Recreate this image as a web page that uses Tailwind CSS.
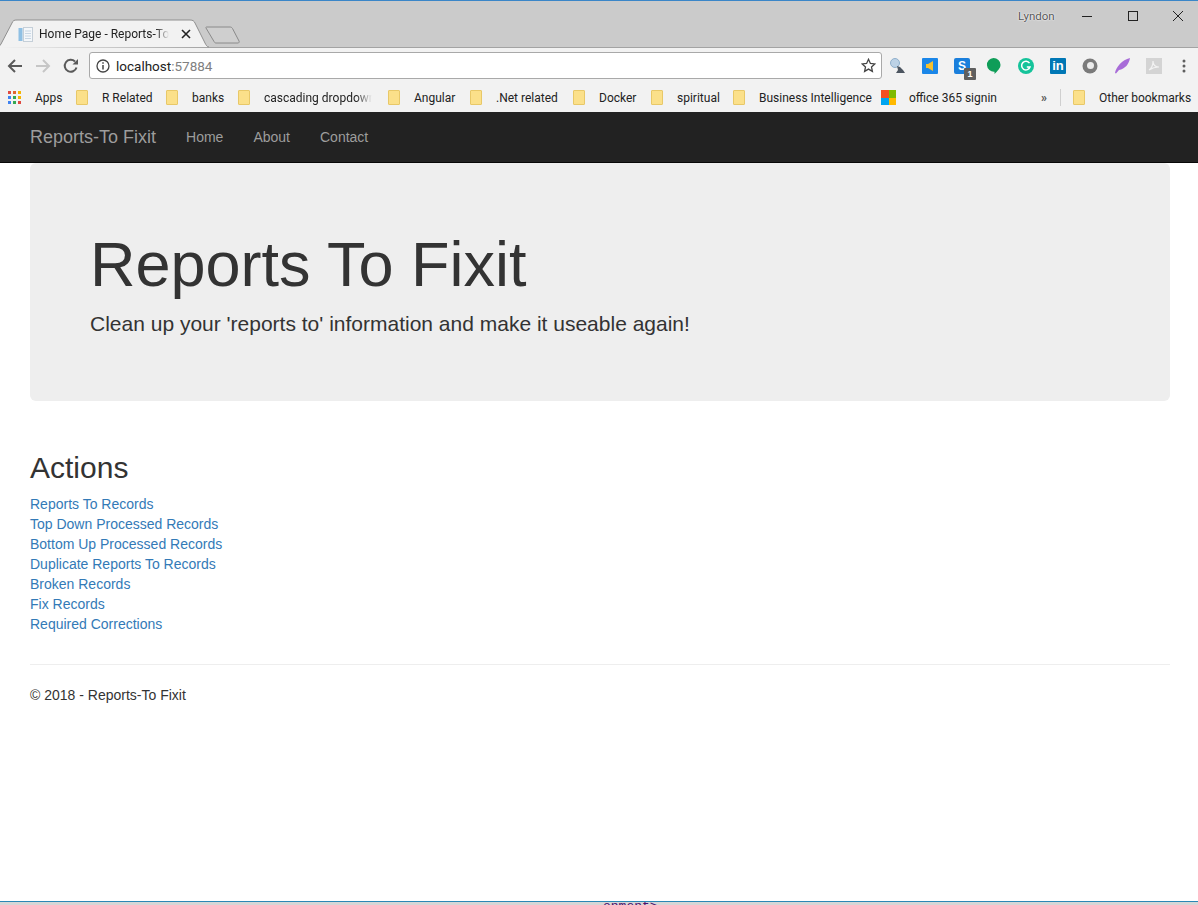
<!DOCTYPE html>
<html lang="en">
<head>
    <meta charset="UTF-8">
    <meta name="viewport" content="width=device-width, initial-scale=1.0">
    <title>Home Page - Reports-To Fixit</title>
    <script src="https://cdn.jsdelivr.net/npm/@tailwindcss/browser@4"></script>
</head>
<body class="bg-white font-['Liberation_Sans',sans-serif] text-[14px] leading-[20px] text-[#333]">
<div class="flex flex-col h-[905px] w-[1198px] overflow-hidden">

    <!-- window title + tabs -->
    <div class="relative h-[48px] shrink-0 bg-[#cbcbcb] border-t-[1px] border-b-[1px] border-t-[#3a86c8] border-b-[#a3a3a3] font-['Roboto',sans-serif]">
        <svg class="absolute left-0 top-[18px]" width="245" height="29" viewBox="0 0 245 29">
            <path d="M-2 29 L1 25 L12 4 C13 1.500 14 1 17 1 H190 C193 1 194 2 195 4 L205 24 C206 26 207 28 209 28" fill="#f2f2f2" stroke="#8f8f8f" stroke-width="1"/>
            <path d="M206 9 C205.500 8.500 206 8 207 8 H230 C231 8 232 8.500 232.500 9.500 L239 22 C239.500 23 239 24 238 24 H216 C215 24 214.500 23.500 214 22.500 Z" fill="#cfcfcf" stroke="#8a8a8a" stroke-width="1"/>
        </svg>
        <div class="relative flex items-center h-[26px] mt-[20px] pl-[18px] w-[200px]">
            <svg width="15" height="15" viewBox="0 0 15 15" class="shrink-0">
                <rect x="0.500" y="1" width="4" height="13" fill="#8fc0e4"/>
                <rect x="5.500" y="0.500" width="9" height="14" fill="#f4f7fa" stroke="#c5cfd8"/>
                <path d="M7 4h6M7 6.500h6M7 9h6M7 11.500h6" stroke="#c7d6e4"/>
            </svg>
            <span class="ml-[6px] w-[130px] text-[12px] text-[#222] whitespace-nowrap overflow-hidden [mask-image:linear-gradient(to_right,black_90%,transparent)]">Home Page - Reports-To Fixit</span>
            <svg width="10" height="10" viewBox="0 0 10 10" class="ml-[12px]"><path d="M1 1l8 8M9 1l-8 8" stroke="#222" stroke-width="1.600"/></svg>
        </div>
        <span class="absolute left-[1018px] top-[8px] text-[11.500px] leading-[14px] text-[#555] [text-shadow:0_0_1px_#fff,0_0_2px_#fff]">Lyndon</span>
        <svg class="absolute left-[1080px] top-[8px]" width="108" height="14" viewBox="0 0 108 14" fill="none" stroke="#222">
            <path d="M2 7.500h10"/>
            <rect x="48.500" y="2.500" width="9" height="9"/>
            <path d="M93 2l10 10M103 2l-10 10"/>
        </svg>
    </div>

    <!-- toolbar -->
    <div class="flex items-center h-[36px] pb-[1px] shrink-0 bg-[#f2f2f2]">
        <svg class="ml-[7px]" width="16" height="16" viewBox="0 0 16 16" fill="none" stroke="#5a5a5a" stroke-width="2"><path d="M15 8H2M8 2L2 8l6 6"/></svg>
        <svg class="ml-[12px]" width="16" height="16" viewBox="0 0 16 16" fill="none" stroke="#c6c6c6" stroke-width="2"><path d="M1 8h13M8 2l6 6-6 6"/></svg>
        <svg class="ml-[12px]" width="16" height="16" viewBox="0 0 16 16" fill="none"><path d="M13.500 9.500A6 6 0 1 1 12 3.500" stroke="#5a5a5a" stroke-width="2"/><path d="M9.500 6.500H15V1z" fill="#5a5a5a"/></svg>
        <div class="flex items-center ml-[10px] w-[793px] h-[27px] bg-white border border-[#a9a9a9] rounded-[3px] pl-[6px] pr-[5px] font-['Roboto',sans-serif]">
            <svg width="14" height="14" viewBox="0 0 14 14" fill="none"><circle cx="7" cy="7" r="6" stroke="#444" stroke-width="1.300"/><path d="M7 6v4.500" stroke="#444" stroke-width="1.500"/><path d="M7 3.200v1.600" stroke="#444" stroke-width="1.500"/></svg>
            <span class="ml-[6px] text-[13.500px] text-[#222]">localhost<span class="text-[#808080]">:57884</span></span>
            <svg class="ml-auto" width="15" height="15" viewBox="0 0 15 15" fill="none" stroke="#444" stroke-width="1.300"><path d="M7.500 1.300l1.900 4.100 4.400.5-3.300 3 .9 4.500-3.900-2.300-3.900 2.300.9-4.500-3.300-3 4.400-.5z"/></svg>
        </div>
        <!-- extensions -->
        <svg class="ml-[7px]" width="18" height="18" viewBox="0 0 18 18">
            <circle cx="6" cy="6" r="4.500" fill="#bcd2e6" stroke="#8fb0cc"/>
            <path d="M8 9l3 1 3 3 2 3H7l2-3z" fill="#4c5560"/>
        </svg>
        <div class="ml-[15px] w-[16px] h-[16px] rounded-[1px] bg-[#1a86e8] flex items-center justify-center">
            <svg width="8" height="10" viewBox="0 0 8 10"><path d="M7 0v10L2 7H0V3h2z" fill="#f5c02e"/></svg>
        </div>
        <div class="relative ml-[16px] w-[16px] h-[16px] rounded-[2px] bg-[#1a7fdc] text-white text-[12px] leading-[16px] font-bold text-center">S
            <span class="absolute left-[10px] top-[10px] w-[12px] h-[12px] rounded-[1px] bg-[#5f5f5f] text-[9px] leading-[12px] text-white">1</span>
        </div>
        <svg class="ml-[16px]" width="15" height="16" viewBox="0 0 15 16"><path d="M7.500 0a7 6.800 0 0 1 7 6.800c0 3.800-3.300 6.500-6 9.200v-2.300A7 6.800 0 0 1 7.500 0z" fill="#0f9d58"/></svg>
        <svg class="ml-[17px]" width="16" height="16" viewBox="0 0 16 16"><circle cx="8" cy="8" r="8" fill="#15c39a"/><path d="M11.500 5.200A4.300 4.300 0 1 0 12 9H8.800" fill="none" stroke="#fff" stroke-width="1.500"/></svg>
        <div class="ml-[16px] w-[16px] h-[16px] rounded-[1px] bg-[#0077b5] text-white text-[13px] leading-[16px] font-bold text-center">in</div>
        <svg class="ml-[16px]" width="16" height="16" viewBox="0 0 16 16"><circle cx="8" cy="8" r="7.500" fill="#7b7b7b"/><circle cx="8.500" cy="7.500" r="3.500" fill="#ececec"/></svg>
        <svg class="ml-[16px]" width="16" height="16" viewBox="0 0 16 16"><path d="M1 15C2 9 8 2 16 0c-1 6-5 11-11 12l-3 3.500z" fill="#a86cd8"/></svg>
        <div class="ml-[16px] w-[16px] h-[16px] bg-[#d4d4d4] flex items-center justify-center">
            <svg width="12" height="12" viewBox="0 0 12 12" fill="none" stroke="#f2f2f2" stroke-width="1.200"><path d="M1 10c3-2 4-6 4-9 0 4 2 6 6 6-4 0-7 1-10 3z"/></svg>
        </div>
        <svg class="ml-[20px]" width="4" height="14" viewBox="0 0 4 14" fill="#5f5f5f"><circle cx="2" cy="2" r="1.500"/><circle cx="2" cy="7" r="1.500"/><circle cx="2" cy="12" r="1.500"/></svg>
    </div>

    <!-- bookmarks bar -->
    <div class="flex items-center h-[28px] shrink-0 bg-[#f2f2f2] pl-[8px] pb-[1px] text-[12px] text-[#222] font-['Roboto',sans-serif] whitespace-nowrap">
        <div class="grid grid-cols-3 gap-[2px] w-[13px] shrink-0">
            <span class="h-[3px] bg-[#e04a3f]"></span><span class="h-[3px] bg-[#e0662f]"></span><span class="h-[3px] bg-[#f5b400]"></span>
            <span class="h-[3px] bg-[#3e82f1]"></span><span class="h-[3px] bg-[#34a853]"></span><span class="h-[3px] bg-[#f5b400]"></span>
            <span class="h-[3px] bg-[#3e82f1]"></span><span class="h-[3px] bg-[#34a853]"></span><span class="h-[3px] bg-[#e04a3f]"></span>
        </div>
        <span class="ml-[14px] w-[41px]">Apps</span>
        <span class="w-[12px] h-[15px] shrink-0 bg-[#fbe08a] border border-[#e8c868] rounded-[1px]"></span>
        <span class="ml-[14px] w-[64px]">R Related</span>
        <span class="w-[12px] h-[15px] shrink-0 bg-[#fbe08a] border border-[#e8c868] rounded-[1px]"></span>
        <span class="ml-[14px] w-[46px]">banks</span>
        <span class="w-[12px] h-[15px] shrink-0 bg-[#fbe08a] border border-[#e8c868] rounded-[1px]"></span>
        <span class="ml-[14px] w-[108px] overflow-hidden [mask-image:linear-gradient(to_right,black_85%,transparent)]">cascading dropdown</span>
        <span class="ml-[16px] w-[12px] h-[15px] shrink-0 bg-[#fbe08a] border border-[#e8c868] rounded-[1px]"></span>
        <span class="ml-[14px] w-[56px]">Angular</span>
        <span class="w-[12px] h-[15px] shrink-0 bg-[#fbe08a] border border-[#e8c868] rounded-[1px]"></span>
        <span class="ml-[14px] w-[77px]">.Net related</span>
        <span class="w-[12px] h-[15px] shrink-0 bg-[#fbe08a] border border-[#e8c868] rounded-[1px]"></span>
        <span class="ml-[14px] w-[52px]">Docker</span>
        <span class="w-[12px] h-[15px] shrink-0 bg-[#fbe08a] border border-[#e8c868] rounded-[1px]"></span>
        <span class="ml-[14px] w-[56px]">spiritual</span>
        <span class="w-[12px] h-[15px] shrink-0 bg-[#fbe08a] border border-[#e8c868] rounded-[1px]"></span>
        <span class="ml-[14px] w-[122px]">Business Intelligence</span>
        <div class="grid grid-cols-2 w-[15px] h-[15px] shrink-0">
            <span class="bg-[#f25022]"></span><span class="bg-[#7fba00]"></span>
            <span class="bg-[#00a4ef]"></span><span class="bg-[#ffb900]"></span>
        </div>
        <span class="ml-[13px] w-[132px]">office 365 signin</span>
        <span class="w-[19px] text-[#555] font-bold">»</span>
        <span class="w-px h-[17px] bg-[#cfcfcf]"></span>
        <span class="ml-[12px] w-[12px] h-[15px] shrink-0 bg-[#fbe08a] border border-[#e8c868] rounded-[1px]"></span>
        <span class="ml-[14px]">Other bookmarks</span>
    </div>

    <!-- navbar -->
    <nav class="flex items-center h-[51px] shrink-0 bg-[#222] border-b border-[#080808] pl-[30px] text-[#9d9d9d]">
        <a href="#" class="text-[18px] mr-[30px]">Reports-To Fixit</a>
        <a href="#" class="mr-[30px]">Home</a>
        <a href="#" class="mr-[30px]">About</a>
        <a href="#">Contact</a>
    </nav>

    <!-- page -->
    <main class="flex-1 pl-[30px] pr-[28px] min-h-0">
        <div class="h-[238px] bg-[#eee] rounded-[6px] px-[60px] pt-[48px]">
            <h1 class="text-[63px] leading-[69px] mt-[19px]">Reports To Fixit</h1>
            <p class="text-[21px] leading-[30px] mt-[10px]">Clean up your 'reports to' information and make it useable again!</p>
        </div>
        <h2 class="text-[30px] leading-[33px] mt-[50px]">Actions</h2>
        <div class="flex flex-col mt-[10px] text-[#337ab7] items-start">
            <a href="#">Reports To Records</a>
            <a href="#">Top Down Processed Records</a>
            <a href="#">Bottom Up Processed Records</a>
            <a href="#">Duplicate Reports To Records</a>
            <a href="#">Broken Records</a>
            <a href="#">Fix Records</a>
            <a href="#">Required Corrections</a>
        </div>
        <hr class="mt-[30px] border-[#eee]">
        <footer class="mt-[20px]">© 2018 - Reports-To Fixit</footer>
    </main>

    <!-- next window peeking out below -->
    <div class="h-[4px] shrink-0 overflow-hidden bg-[#d6d6d6] border-t border-[#2b87b5] pl-[603px]">
        <div class="-mt-[3px] font-['Liberation_Mono',monospace] text-[13px] leading-[15px] text-[#4b0f6b]">onment&gt;</div>
    </div>
</div>
</body>
</html>
